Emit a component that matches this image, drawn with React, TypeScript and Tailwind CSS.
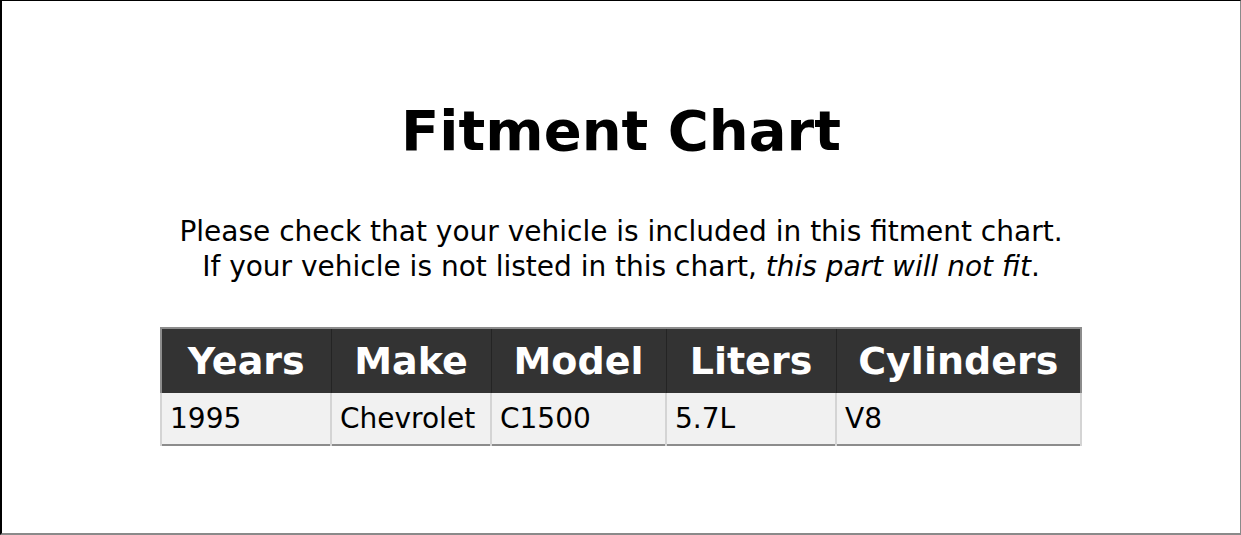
const columns = [
    { label: 'Years', width: 'w-[170px]' },
    { label: 'Make', width: 'w-[160px]' },
    { label: 'Model', width: 'w-[175px]' },
    { label: 'Liters', width: 'w-[170px]' },
    { label: 'Cylinders', width: 'w-[245px]' },
]

const rows = [
    ['1995', 'Chevrolet', 'C1500', '5.7L', 'V8'],
]

function App() {
    return <div className="w-[1241px] h-[535px] bg-white border-t border-l-2 border-t-black border-l-black border-r border-b-2 border-r-[#8a8a8a] border-b-[#8a8a8a] flex flex-col items-center font-['DejaVu_Sans',Verdana,sans-serif] text-black">
        <h1 className="mt-[94px] text-[56px] leading-[72px] font-bold">Fitment Chart</h1>
        <div className="mt-[47px] text-center text-[28px] leading-[35px]">
            <p>Please check that your vehicle is included in this fitment chart.</p>
            <p>If your vehicle is not listed in this chart, <em>this part will not fit</em>.</p>
        </div>
        <table className="mt-[43px] w-[920px] border-collapse border-2 border-[#8c8c8c] table-fixed">
            <thead>
                <tr className="bg-[#333333] text-white">
                    {columns.map((col) => (
                        <th key={col.label} className={`${col.width} h-[65px] px-1 text-center text-[38px] font-bold border-x border-[#242424]`}>{col.label}</th>
                    ))}
                </tr>
            </thead>
            <tbody>
                {rows.map((row, i) => (
                    <tr key={i} className="bg-[#f1f1f1]">
                        {row.map((cell, j) => (
                            <td key={j} className="h-[52px] px-[8px] text-left text-[28px] border-x-2 border-[#d4d4d4]">{cell}</td>
                        ))}
                    </tr>
                ))}
            </tbody>
        </table>
    </div>
}

export default App;
